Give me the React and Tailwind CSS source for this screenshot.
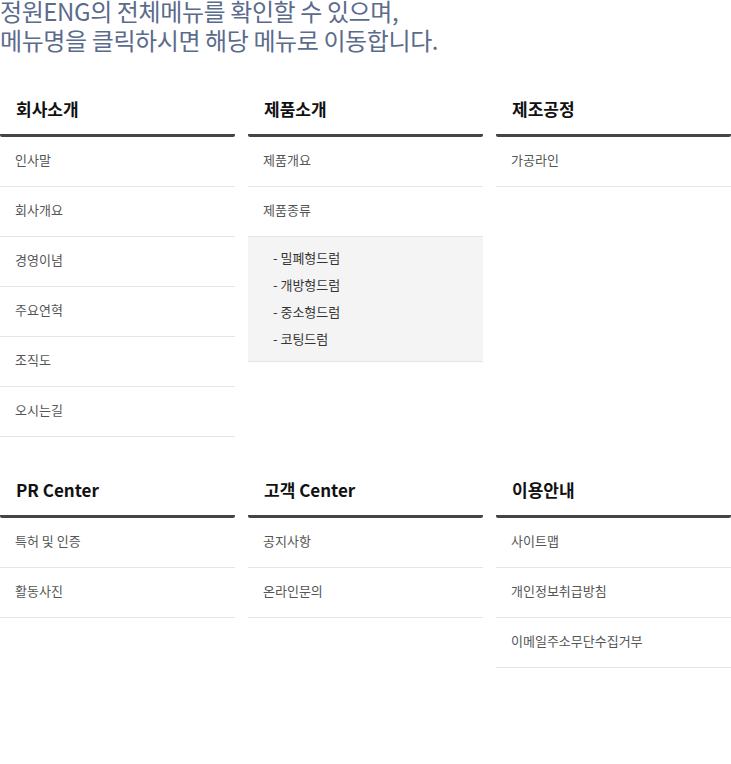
const menus = [
  [
    { title: '회사소개', items: [{ label: '인사말' }, { label: '회사개요' }, { label: '경영이념' }, { label: '주요연혁' }, { label: '조직도' }, { label: '오시는길' }] },
    {
      title: '제품소개',
      items: [
        { label: '제품개요' },
        { label: '제품종류', sub: ['밀폐형드럼', '개방형드럼', '중소형드럼', '코팅드럼'] },
      ],
    },
    { title: '제조공정', items: [{ label: '가공라인' }] },
  ],
  [
    { title: 'PR Center', items: [{ label: '특허 및 인증' }, { label: '활동사진' }] },
    { title: '고객 Center', items: [{ label: '공지사항' }, { label: '온라인문의' }] },
    { title: '이용안내', items: [{ label: '사이트맵' }, { label: '개인정보취급방침' }, { label: '이메일주소무단수집거부' }] },
  ],
];

const MenuBox = ({ title, items }) => (
  <div className="flex flex-col">
    <h3 className="h-[52px] pl-4 pt-[11px] text-[17px] font-bold text-[#111] border-b-[3px] border-[#444] rounded-b-[2px]">
      {title}
    </h3>
    <ul>
      {items.map(({ label, sub }) => (
        <li key={label}>
          <a href="#" className="flex h-[50px] items-center pl-[15px] pb-[3px] text-[13px] text-[#555] border-b border-[#e5e5e5]">
            {label}
          </a>
          {sub && (
            <ul className="bg-[#f4f4f4] pt-[8px] pb-[8px] border-b border-[#e5e5e5]">
              {sub.map((s) => (
                <li key={s} className="h-[27px] flex items-center pl-[25px] pb-[2px] text-[13px] text-[#333]">
                  - {s}
                </li>
              ))}
            </ul>
          )}
        </li>
      ))}
    </ul>
  </div>
);

export default function App() {
  return (
    <div
      className="w-[731px] h-[764px] bg-white overflow-hidden"
      style={{ fontFamily: '"Noto Sans CJK KR", "Noto Sans", sans-serif' }}
    >
      <p className="-mt-[4px] text-[24px] leading-[29px] tracking-[-0.4px] text-[#5b6b8c]">
        정원ENG의 전체메뉴를 확인할 수 있으며,
        <br />
        메뉴명을 클릭하시면 해당 메뉴로 이동합니다.
      </p>
      <div className="mt-[31px] flex flex-col gap-[29px]">
        {menus.map((row, i) => (
          <div key={i} className="grid grid-cols-3 gap-[13px]">
            {row.map((m) => (
              <MenuBox key={m.title} {...m} />
            ))}
          </div>
        ))}
      </div>
    </div>
  );
}
